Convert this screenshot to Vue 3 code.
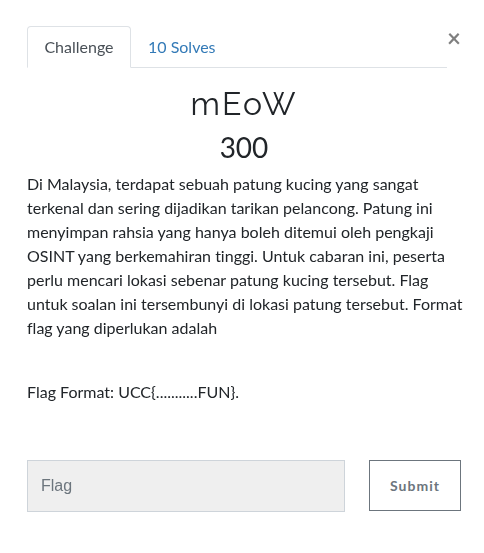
<script setup>
import { ref } from 'vue'

const tab = ref('challenge')
const flag = ref('')
</script>

<template>
  <main class="modal">
    <header class="top">
      <nav class="tabs">
        <button type="button" class="tab" :class="{ active: tab === 'challenge' }" @click="tab = 'challenge'">Challenge</button>
        <button type="button" class="tab" :class="{ active: tab === 'solves' }" @click="tab = 'solves'">10 Solves</button>
      </nav>
      <button type="button" class="close" aria-label="Close">×</button>
    </header>
    <h2 class="name">mEoW</h2>
    <h3 class="value">300</h3>
    <div class="desc">
      <p>Di Malaysia, terdapat sebuah patung kucing yang sangat terkenal dan sering dijadikan tarikan pelancong. Patung ini menyimpan rahsia yang hanya boleh ditemui oleh pengkaji OSINT yang berkemahiran tinggi. Untuk cabaran ini, peserta perlu mencari lokasi sebenar patung kucing tersebut. Flag untuk soalan ini tersembunyi di lokasi patung tersebut. Format flag yang diperlukan adalah</p>
      <p>Flag Format: UCC{...........FUN}.</p>
    </div>
    <form class="submit-row" @submit.prevent>
      <input v-model="flag" class="flag" type="text" placeholder="Flag" aria-label="Flag" />
      <button type="submit" class="submit">Submit</button>
    </form>
  </main>
</template>

<style>
body {
  background: #fff;
}
</style>

<style scoped>
* {
  box-sizing: border-box;
}
.modal {
  padding: 26px 23px 40px 27px;
  font: 16px/24px Lato, "Liberation Sans", sans-serif;
  color: #212529;
  will-change: opacity;
}
button {
  font: inherit;
  cursor: pointer;
}
.top {
  display: flex;
  align-items: flex-start;
}
.tabs {
  flex: 1;
  display: flex;
  border-bottom: 1px solid #dee2e6;
}
.tab {
  height: 42px;
  margin-bottom: -1px;
  padding: 0 16px;
  border: 1px solid transparent;
  border-radius: 4px 4px 0 0;
  background: none;
  color: #337ab7;
}
.tab.active {
  min-width: 104px;
  color: #495057;
  background: #fff;
  border-color: #dee2e6 #dee2e6 #fff;
}
.close {
  width: 14px;
  padding: 0;
  border: 0;
  background: none;
  color: #000;
  opacity: 0.5;
  font-size: 24px;
  font-weight: 700;
  line-height: 24px;
}
.name {
  margin: 16px 0 0;
  text-align: center;
  font: 400 32px/40px Raleway, Lato, sans-serif;
  letter-spacing: 2px;
}
.value {
  margin: 6px 0 8px;
  text-align: center;
  font-size: 28px;
  font-weight: 400;
  line-height: 34px;
}
.desc {
  margin-right: -8px;
  font-variant-ligatures: none;
}
.desc p {
  margin: 0 0 40px;
}
.submit-row {
  display: flex;
  gap: 24px;
  padding-top: 16px;
}
.flag {
  flex: 1;
  min-width: 0;
  height: 52px;
  padding: 0 13px;
  border: 1px solid #ced4da;
  border-radius: 0;
  background: #efefef;
  color: #495057;
  font: 16px/24px "Liberation Sans", sans-serif;
}
.flag::placeholder {
  color: #6c757d;
  opacity: 1;
}
.submit {
  width: 92px;
  height: 51px;
  padding: 0;
  border: 1px solid #6c757d;
  background: #fff;
  color: #6c757d;
  font-size: 14px;
  font-weight: 700;
  letter-spacing: 1px;
}
</style>
